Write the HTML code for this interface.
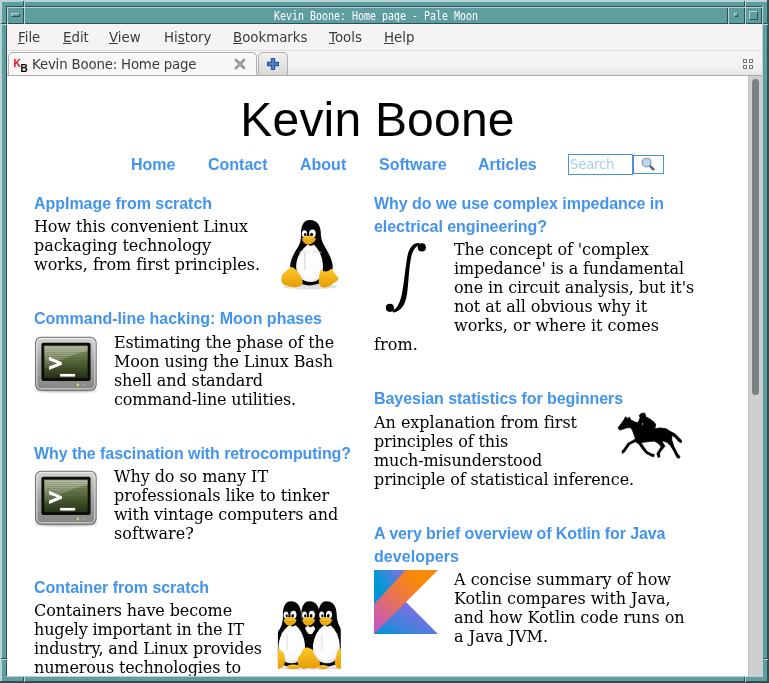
<!DOCTYPE html>
<html lang="en">
<head>
<meta charset="utf-8">
<title>Kevin Boone: Home page - Pale Moon</title>
<style>
html,body{margin:0;padding:0;}
body{-webkit-font-smoothing:antialiased;width:769px;height:683px;position:relative;overflow:hidden;background:#5f9ea0;font-family:"DejaVu Sans","Liberation Sans",sans-serif;}
.abs{position:absolute;}
/* window frame */
#frame{left:0;top:0;width:769px;height:683px;background:#5f9ea0;will-change:transform;}
.lt{background:#b7d3d3;}
.dk{background:#2f4f50;}
#client{left:7px;top:24px;width:755px;height:652px;background:#fff;overflow:hidden;will-change:transform;}
#titletext{left:25px;top:8px;width:702px;height:15px;color:#fff;text-align:center;font-family:"DejaVu Sans Mono","Liberation Mono",monospace;font-size:10px;line-height:15px;white-space:pre;}
#titletext span{display:inline-block;transform:scale(1,1.25);transform-origin:50% 60%;letter-spacing:-0.02px;}
/* browser chrome */
#menubar{left:0;top:0;width:755px;height:26px;background:#f5f4f2;}
#menubar span{position:absolute;top:5px;font-size:13.33px;line-height:18px;color:#3a3a3a;white-space:nowrap;}
#menubar u{text-decoration:underline;text-underline-offset:1px;text-decoration-thickness:1px;}
#tabbar{left:0;top:26px;width:755px;height:26px;background:linear-gradient(#f6f5f3 0%,#f4f3f1 60%,#e6e5e3 100%);border-top:1px solid #dddcda;box-sizing:border-box;border-bottom:1px solid #a9a9a9;}
#tab{left:1px;top:28px;width:249px;height:23px;box-sizing:border-box;border:1px solid #b0b0b0;border-bottom:none;border-radius:5px 5px 0 0;background:#f8f7f6;}
#tabtitle{left:25px;top:32px;letter-spacing:-0.18px;font-size:13.33px;line-height:18px;color:#3a3a3a;white-space:nowrap;}
#newtab{left:251px;top:28px;width:30px;height:23px;box-sizing:border-box;border:1px solid #b0b0b0;border-bottom:none;border-radius:5px 5px 0 0;background:linear-gradient(#f2f1ef,#d9d8d6);}
/* page */
#page{left:0;top:52px;width:741px;height:600px;background:#fff;overflow:hidden;}
#sbar{left:741px;top:52px;width:14px;height:600px;background:#cfcfcf;border-left:1px solid #c4beb9;box-sizing:border-box;}
#thumb{left:745px;top:55px;width:7px;height:316px;border-radius:3.5px;background:#7d8183;}
h1{position:absolute;margin:0;left:0;top:16px;letter-spacing:0.2px;width:741px;text-align:center;font-family:"Liberation Sans",Arial,sans-serif;font-weight:normal;font-size:48px;line-height:56px;color:#000;white-space:nowrap;}
.nav{position:absolute;top:79px;font-family:"Liberation Sans",Arial,sans-serif;font-weight:bold;font-size:16px;line-height:20px;color:#4294ef;white-space:nowrap;}
.hd{position:absolute;font-family:"Liberation Sans",Arial,sans-serif;font-weight:bold;font-size:16px;line-height:23px;color:#4294ef;white-space:nowrap;}
.tx{position:absolute;font-family:"DejaVu Serif","Liberation Serif",serif;font-size:16px;line-height:19px;color:#000;white-space:nowrap;}
</style>
</head>
<body>
<svg width="0" height="0" style="position:absolute">
<defs>
<linearGradient id="gy" x1="0" y1="0" x2="0" y2="1"><stop offset="0" stop-color="#fcc82a"/><stop offset="1" stop-color="#e89c06"/></linearGradient>
<radialGradient id="gb" cx="0.5" cy="0.45" r="0.6"><stop offset="0" stop-color="#ffffff"/><stop offset="0.8" stop-color="#fbfbfb"/><stop offset="1" stop-color="#d8d8d8"/></radialGradient>
<symbol id="tux" viewBox="0 0 607 683" overflow="visible">
<path d="M300 75 C362 75 388 122 386 190 C390 262 440 300 466 380 C486 440 476 476 440 474 C430 520 400 555 360 562 C320 576 280 576 240 562 C200 545 170 510 160 470 C138 420 170 350 200 300 C230 260 236 230 235 180 C235 110 260 75 300 75Z" fill="#050505"/>
<path d="M288 262 C230 300 190 380 200 452 C210 522 260 546 310 546 C372 546 402 500 402 430 C402 360 372 300 332 262 C318 275 300 275 288 262Z" fill="url(#gb)"/>
<path d="M262 330 C268 400 262 440 266 452" stroke="#c9c9c9" stroke-width="7" fill="none" stroke-linecap="round"/>
<path d="M225 318 C250 308 272 312 290 318 M330 318 C350 312 370 312 388 322" stroke="#d4d4d4" stroke-width="6" fill="none" stroke-linecap="round"/>
<ellipse cx="261" cy="180" rx="20" ry="27" fill="#fff"/><ellipse cx="322" cy="178" rx="25" ry="30" fill="#fff"/>
<ellipse cx="267" cy="186" rx="9" ry="12" fill="#000"/><ellipse cx="316" cy="186" rx="11" ry="14" fill="#000"/>
<path d="M243 216 C262 192 302 184 346 214 C352 236 312 262 286 264 C260 256 244 236 243 216Z" fill="url(#gy)"/>
<path d="M250 222 C280 236 315 232 342 218" stroke="#c98a00" stroke-width="4" fill="none"/>
<path d="M150 434 C120 470 96 480 90 500 C80 540 90 566 120 571 C170 592 232 592 246 560 C256 530 220 480 200 460 C186 440 166 429 150 434Z" fill="url(#gy)"/>
<path d="M384 450 C374 500 360 542 380 576 C410 602 450 582 480 556 C512 540 526 526 516 510 C490 490 482 462 466 444 C440 476 400 470 384 450Z" fill="url(#gy)"/>
</symbol>
<linearGradient id="tf" x1="0" y1="0" x2="0" y2="1"><stop offset="0" stop-color="#d6d6d4"/><stop offset="0.5" stop-color="#a3a3a1"/><stop offset="1" stop-color="#858583"/></linearGradient>
<linearGradient id="ts" x1="0" y1="0" x2="0" y2="1"><stop offset="0" stop-color="#94a273"/><stop offset="0.45" stop-color="#5d6e3f"/><stop offset="1" stop-color="#273517"/></linearGradient>
<linearGradient id="tg" x1="0" y1="0" x2="0" y2="1"><stop offset="0" stop-color="#fff" stop-opacity="0.35"/><stop offset="1" stop-color="#fff" stop-opacity="0.08"/></linearGradient>
<pattern id="scan" x="0" y="135" width="20" height="17.09" patternUnits="userSpaceOnUse"><rect x="0" y="0" width="20" height="8.5" fill="#000" opacity="0.16"/></pattern>
<filter id="blur4" x="-20%" y="-100%" width="140%" height="300%"><feGaussianBlur stdDeviation="9"/></filter>
<symbol id="term" viewBox="0 0 769 598" overflow="visible">
<ellipse cx="350" cy="512" rx="265" ry="18" fill="#000" opacity="0.35" filter="url(#blur4)"/>
<rect x="90" y="62" width="518" height="452" rx="48" fill="url(#tf)" stroke="#6e6e6c" stroke-width="9"/>
<rect x="101" y="73" width="496" height="430" rx="38" fill="none" stroke="#efefed" stroke-width="8" opacity="0.9"/>
<rect x="140" y="108" width="420" height="327" rx="16" fill="#0e0f0c"/>
<rect x="165" y="135" width="370" height="275" fill="url(#ts)"/>
<path d="M165 135 H535 V180 C420 200 300 260 165 330Z" fill="url(#tg)"/>
<rect x="165" y="135" width="370" height="275" fill="url(#scan)"/>
<path d="M205 228 L315 275 L315 296 L205 341 L205 312 L274 285 L205 258Z" fill="#fff"/>
<rect x="300" y="375" width="128" height="23" fill="#fff"/>
<circle cx="452" cy="468" r="14" fill="#9fe040" opacity="0.45"/><circle cx="452" cy="468" r="8" fill="#c6ff6a"/>
<rect x="480" y="458" width="46" height="20" rx="6" fill="#9c9c9a" stroke="#7e7e7c" stroke-width="3"/>
</symbol>
</defs>
</svg>
<div id="frame" class="abs">
  <!-- outer bevel -->
  <div class="abs lt" style="left:0;top:0;width:769px;height:2px"></div>
  <div class="abs lt" style="left:0;top:0;width:2px;height:683px"></div>
  <div class="abs dk" style="left:0;top:681px;width:769px;height:2px"></div>
  <div class="abs dk" style="left:767px;top:0;width:2px;height:683px"></div>
  <!-- inner bevel -->
  <div class="abs dk" style="left:6px;top:6px;width:757px;height:1px"></div>
  <div class="abs dk" style="left:6px;top:6px;width:1px;height:671px"></div>
  <div class="abs lt" style="left:6px;top:676px;width:757px;height:1px"></div>
  <div class="abs lt" style="left:762px;top:6px;width:1px;height:671px"></div>
  <!-- title row bevels -->
  <div class="abs lt" style="left:7px;top:7px;width:755px;height:1px"></div>
  <div class="abs dk" style="left:7px;top:23px;width:755px;height:1px"></div>
  <!-- title bar buttons separators -->
  <div class="abs dk" style="left:23px;top:8px;width:1px;height:16px"></div>
  <div class="abs lt" style="left:24px;top:7px;width:1px;height:17px"></div>
  <div class="abs lt" style="left:7px;top:7px;width:1px;height:17px"></div>
  <div class="abs dk" style="left:727px;top:8px;width:1px;height:16px"></div>
  <div class="abs lt" style="left:728px;top:7px;width:1px;height:17px"></div>
  <div class="abs dk" style="left:744px;top:8px;width:1px;height:16px"></div>
  <div class="abs lt" style="left:745px;top:7px;width:1px;height:17px"></div>
  <div class="abs dk" style="left:761px;top:8px;width:1px;height:16px"></div>
  <!-- menu button glyph -->
  <div class="abs" style="left:11px;top:13px;width:9px;height:4px;box-sizing:border-box;border:1px solid;border-color:#b7d3d3 #2f4f50 #2f4f50 #b7d3d3;"></div>
  <!-- minimize glyph -->
  <div class="abs" style="left:734px;top:13px;width:4px;height:4px;box-sizing:border-box;border:1px solid;border-color:#b7d3d3 #2f4f50 #2f4f50 #b7d3d3;"></div>
  <!-- maximize glyph -->
  <div class="abs" style="left:749px;top:11px;width:9px;height:9px;box-sizing:border-box;border:1px solid;border-color:#b7d3d3 #2f4f50 #2f4f50 #b7d3d3;"></div>
  <!-- resize corner marks -->
  <div class="abs dk" style="left:23px;top:1px;width:1px;height:6px"></div>
  <div class="abs lt" style="left:24px;top:2px;width:1px;height:5px"></div>
  <div class="abs dk" style="left:744px;top:1px;width:1px;height:6px"></div>
  <div class="abs lt" style="left:745px;top:2px;width:1px;height:5px"></div>
  <div class="abs dk" style="left:1px;top:23px;width:6px;height:1px"></div>
  <div class="abs lt" style="left:2px;top:24px;width:5px;height:1px"></div>
  <div class="abs dk" style="left:763px;top:23px;width:5px;height:1px"></div>
  <div class="abs lt" style="left:763px;top:24px;width:5px;height:1px"></div>
  <div class="abs dk" style="left:1px;top:658px;width:6px;height:1px"></div>
  <div class="abs lt" style="left:2px;top:659px;width:5px;height:1px"></div>
  <div class="abs dk" style="left:763px;top:658px;width:5px;height:1px"></div>
  <div class="abs lt" style="left:763px;top:659px;width:5px;height:1px"></div>
  <div class="abs dk" style="left:23px;top:677px;width:1px;height:5px"></div>
  <div class="abs lt" style="left:24px;top:677px;width:1px;height:5px"></div>
  <div class="abs dk" style="left:744px;top:677px;width:1px;height:5px"></div>
  <div class="abs lt" style="left:745px;top:677px;width:1px;height:5px"></div>
  <div id="titletext" class="abs"><span>Kevin Boone: Home page - Pale Moon</span></div>
</div>
<div id="client" class="abs">
  <div id="menubar" class="abs">
    <span style="left:11px"><u>F</u>ile</span>
    <span style="left:56px"><u>E</u>dit</span>
    <span style="left:102px"><u>V</u>iew</span>
    <span style="left:157px">Hi<u>s</u>tory</span>
    <span style="left:226px"><u>B</u>ookmarks</span>
    <span style="left:322px"><u>T</u>ools</span>
    <span style="left:377px"><u>H</u>elp</span>
  </div>
  <div id="tabbar" class="abs"></div>
  <div id="tab" class="abs"></div>
  <div id="tabtitle" class="abs">Kevin Boone: Home page</div>
  <div id="newtab" class="abs"></div>
  <div class="abs" style="left:6.5px;top:35px;font:bold 10px/10px 'Liberation Sans',Arial,sans-serif;color:#f00010;">K</div>
  <div class="abs" style="left:13.5px;top:40px;font:bold 10px/10px 'Liberation Sans',Arial,sans-serif;color:#000;">B</div>
  <svg class="abs" style="left:227px;top:34px" width="12" height="12" viewBox="0 0 12 12"><path d="M2 2 L10 10 M10 2 L2 10" stroke="#8a8c87" stroke-width="2.7" stroke-linecap="round" fill="none"/><path d="M2 2 L10 10 M10 2 L2 10" stroke="#c9cac6" stroke-width="0.7" stroke-linecap="round" fill="none"/></svg>
  <svg class="abs" style="left:259px;top:33px" width="14" height="14" viewBox="0 0 14 14"><path d="M5.4 1.5 h3.2 v3.9 h3.9 v3.2 h-3.9 v3.9 h-3.2 v-3.9 h-3.9 v-3.2 h3.9 z" fill="#4a80c6" stroke="#2a559b" stroke-width="1.1" stroke-linejoin="round"/></svg>
  <svg class="abs" style="left:736px;top:35px" width="10" height="10" viewBox="0 0 10 10"><g fill="none" stroke="#7a7a7a" stroke-width="1"><rect x="0.5" y="0.5" width="3" height="3"/><rect x="6.5" y="0.5" width="3" height="3"/><rect x="0.5" y="6.5" width="3" height="3"/><rect x="6.5" y="6.5" width="3" height="3"/></g></svg>
  <div id="page" class="abs">
    <h1>Kevin Boone</h1>
    <div class="nav" style="left:124px">Home</div>
    <div class="nav" style="left:201px">Contact</div>
    <div class="nav" style="left:293px">About</div>
    <div class="nav" style="left:372px">Software</div>
    <div class="nav" style="left:471px">Articles</div>
<svg class="abs" style="left:263px;top:134px" width="80" height="90"><ellipse cx="40" cy="76.5" rx="27" ry="3" fill="#000" opacity="0.12"/><use href="#tux" x="0" y="0" width="80" height="90"/></svg>
<svg class="abs" style="left:18px;top:254px" width="90" height="70"><use href="#term" x="0" y="0" width="90" height="70"/></svg>
<svg class="abs" style="left:18px;top:388px" width="90" height="70"><use href="#term" x="0" y="0" width="90" height="70"/></svg>
<svg class="abs" style="left:258px;top:514px" width="90" height="90" viewBox="0 0 683 683">
<defs><clipPath id="pc"><rect x="98" y="80" width="477" height="525"/></clipPath></defs>
<ellipse cx="336" cy="592" rx="235" ry="14" fill="#000" opacity="0.12"/>
<g clip-path="url(#pc)">
<g transform="translate(59.4,10) scale(0.92,1.0)"><use href="#tux" x="0" y="0" width="607" height="683"/></g>
<rect x="292" y="335" width="90" height="230" fill="#050505"/>
<g transform="translate(-80.6,10) scale(0.92,1.0)"><use href="#tux" x="0" y="0" width="607" height="683"/></g>
<g transform="translate(189.4,10) scale(0.92,1.0)"><use href="#tux" x="0" y="0" width="607" height="683"/></g>
<path d="M190 268 C126 300 104 380 106 450 C108 520 150 548 205 548 C270 548 306 500 304 430 C302 360 272 300 232 268 C218 280 204 280 190 268Z" fill="url(#gb)"/>
<path d="M452 268 C392 300 360 380 364 450 C368 520 412 548 468 548 C530 548 570 500 568 430 C566 360 536 300 496 268 C482 280 466 280 452 268Z" fill="url(#gb)"/>
<path d="M165 340 C170 400 166 440 168 455 M430 340 C434 400 430 440 432 455" stroke="#cfcfcf" stroke-width="6" fill="none" stroke-linecap="round"/>
<path d="M280 240 C300 300 325 330 345 345 C330 380 345 420 340 450 C320 420 300 350 262 262Z M400 255 C385 300 365 330 345 345 C350 380 348 420 352 450 C362 400 385 330 420 270Z" fill="#050505"/>
<ellipse cx="100" cy="525" rx="52" ry="74" fill="url(#gy)"/>
<ellipse cx="215" cy="583" rx="52" ry="17" fill="url(#gy)"/>
<ellipse cx="440" cy="585" rx="42" ry="15" fill="url(#gy)"/>
<ellipse cx="572" cy="520" rx="32" ry="78" fill="url(#gy)"/>
<path d="M300 440 C330 428 345 445 360 470 C390 510 418 545 410 575 C380 597 300 597 255 577 C240 540 250 500 272 490 C280 470 285 450 300 440Z" fill="url(#gy)"/>
</g></svg>
<svg class="abs" style="left:358px;top:159px" width="90" height="90" viewBox="0 0 683 683">
<circle cx="431" cy="94" r="31" fill="#000"/><circle cx="189" cy="553" r="31" fill="#000"/>
<path d="M405 60 C360 62 332 100 320 170 C305 260 300 330 285 420 C272 500 250 560 205 575 L215 588 C270 580 305 540 320 440 C332 340 332 270 348 180 C360 115 385 80 425 72Z" fill="#000"/>
</svg>
<svg class="abs" style="left:598px;top:324px" width="90" height="70" viewBox="0 0 769 598">
<path d="M112 238 L140 200 L165 165 L175 143 L190 158 L212 147 L215 167 L250 185 L280 195 L290 180 L300 150 L293 130 L310 115 L335 111 L347 125 L345 141 L380 160 L420 190 L433 210 L425 245 L470 239 L520 245 L560 270 L600 290 L640 330 L656 350 L650 366 L630 355 L600 320 L572 300 L570 340 L590 400 L620 460 L641 485 L632 499 L614 490 L590 440 L560 390 L530 362 L500 350 L490 360 L512 395 L482 430 L466 455 L469 485 L455 491 L444 460 L460 430 L480 400 L455 370 L420 350 L380 355 L330 360 L308 365 L332 402 L360 440 L400 462 L421 465 L415 486 L390 476 L350 455 L320 420 L290 376 L262 356 L215 376 L190 410 L165 446 L150 456 L144 440 L165 414 L195 370 L240 345 L260 334 L250 300 L235 260 L220 236 L190 236 L150 250 L125 256 Z" fill="#000" stroke="#000" stroke-width="7" stroke-linejoin="round"/>
<circle cx="321" cy="204" r="6" fill="#fff"/>
</svg>
<svg class="abs" style="left:367px;top:494px" width="64" height="64" viewBox="0 0 64 64">
<defs>
<linearGradient id="k1" x1="0" y1="0.6" x2="0.9" y2="0"><stop offset="0.1" stop-color="#0095d5"/><stop offset="0.3" stop-color="#0a97d8"/><stop offset="1" stop-color="#8a6fe0"/></linearGradient>
<linearGradient id="k2" x1="0" y1="1" x2="1" y2="0"><stop offset="0.1" stop-color="#c757bc"/><stop offset="0.2" stop-color="#d0609a"/><stop offset="0.55" stop-color="#f07c3a"/><stop offset="0.75" stop-color="#f88909"/></linearGradient>
<linearGradient id="k3" x1="0" y1="1" x2="0.75" y2="0.25"><stop offset="0.1" stop-color="#0095d5"/><stop offset="0.4" stop-color="#3c83dc"/><stop offset="1" stop-color="#806ee3"/></linearGradient>
</defs>
<polygon points="0,0 33,0 0,35" fill="url(#k1)"/>
<polygon points="0,64 0,63 31.5,31.5 32,32 64,64" fill="url(#k3)"/>
<polygon points="32,0 64,0 0,64 0,34" fill="url(#k2)"/>
</svg>
<div class="abs" style="left:561px;top:78px;width:65px;height:21px;box-sizing:border-box;border:1px solid #4a90e2;background:#fff;"></div>
<div class="abs" style="left:563px;top:79px;font:13.33px/18px 'DejaVu Sans','Liberation Sans',sans-serif;color:#a9cdf3;letter-spacing:-0.25px;margin-top:1px;">Search</div>
<div class="abs" style="left:626px;top:79px;width:31px;height:19px;box-sizing:border-box;border:1px solid #4a90e2;background:#fff;"></div>
<svg class="abs" style="left:634px;top:81px" width="16" height="16" viewBox="0 0 16 16"><path d="M8 8 L12.4 12.4" stroke="#5a6268" stroke-width="2.4" stroke-linecap="round"/><circle cx="5.6" cy="5.6" r="4.4" fill="#b7d7f5" stroke="#8a9299" stroke-width="1.1"/></svg>
<div class="hd" style="left:27px;top:116px"><span style="letter-spacing:-0.034px">AppImage from scratch</span></div>
<div class="tx" style="left:27px;top:141px"><span style="letter-spacing:-0.120px">How this convenient Linux</span><br><span style="letter-spacing:-0.055px">packaging technology</span><br><span style="letter-spacing:-0.015px">works, from first principles.</span></div>
<div class="hd" style="left:27px;top:231px"><span style="letter-spacing:-0.001px">Command-line hacking: Moon phases</span></div>
<div class="tx" style="left:107px;top:257px"><span style="letter-spacing:-0.160px">Estimating the phase of the</span><br><span style="letter-spacing:-0.115px">Moon using the Linux Bash</span><br><span style="letter-spacing:-0.091px">shell and standard</span><br><span style="letter-spacing:-0.171px">command-line utilities.</span></div>
<div class="hd" style="left:27px;top:366px"><span style="letter-spacing:-0.075px">Why the fascination with retrocomputing?</span></div>
<div class="tx" style="left:107px;top:391px"><span style="letter-spacing:-0.053px">Why do so many IT</span><br><span style="letter-spacing:-0.059px">professionals like to tinker</span><br><span style="letter-spacing:-0.119px">with vintage computers and</span><br><span style="letter-spacing:0.097px">software?</span></div>
<div class="hd" style="left:27px;top:500px"><span style="letter-spacing:-0.047px">Container from scratch</span></div>
<div class="tx" style="left:27px;top:525px"><span style="letter-spacing:-0.108px">Containers have become</span><br><span style="letter-spacing:-0.152px">hugely important in the IT</span><br><span style="letter-spacing:-0.097px">industry, and Linux provides</span><br><span style="letter-spacing:-0.132px">numerous technologies to</span></div>
<div class="hd" style="left:367px;top:116px"><span style="letter-spacing:-0.048px">Why do we use complex impedance in</span><br><span style="letter-spacing:-0.056px">electrical engineering?</span></div>
<div class="tx" style="left:447px;top:164px"><span style="letter-spacing:-0.099px">The concept of 'complex</span><br><span style="letter-spacing:-0.125px">impedance' is a fundamental</span><br><span style="letter-spacing:-0.124px">one in circuit analysis, but it's</span><br><span style="letter-spacing:-0.052px">not at all obvious why it</span><br><span style="letter-spacing:-0.007px">works, or where it comes</span></div>
<div class="tx" style="left:367px;top:259px"><span style="letter-spacing:0.108px">from.</span></div>
<div class="hd" style="left:367px;top:311px"><span style="letter-spacing:-0.053px">Bayesian statistics for beginners</span></div>
<div class="tx" style="left:367px;top:337px"><span style="letter-spacing:-0.022px">An explanation from first</span><br><span style="letter-spacing:-0.123px">principles of this</span><br><span style="letter-spacing:-0.154px">much-misunderstood</span><br><span style="letter-spacing:-0.111px">principle of statistical inference.</span></div>
<div class="hd" style="left:367px;top:446px"><span style="letter-spacing:-0.102px">A very brief overview of Kotlin for Java</span><br><span style="letter-spacing:0.052px">developers</span></div>
<div class="tx" style="left:447px;top:494px"><span style="letter-spacing:0.007px">A concise summary of how</span><br><span style="letter-spacing:-0.033px">Kotlin compares with Java,</span><br><span style="letter-spacing:-0.052px">and how Kotlin code runs on</span><br><span style="letter-spacing:0.029px">a Java JVM.</span></div>
  </div>
  <div id="sbar" class="abs"></div>
  <div id="thumb" class="abs"></div>
</div>
</body>
</html>
